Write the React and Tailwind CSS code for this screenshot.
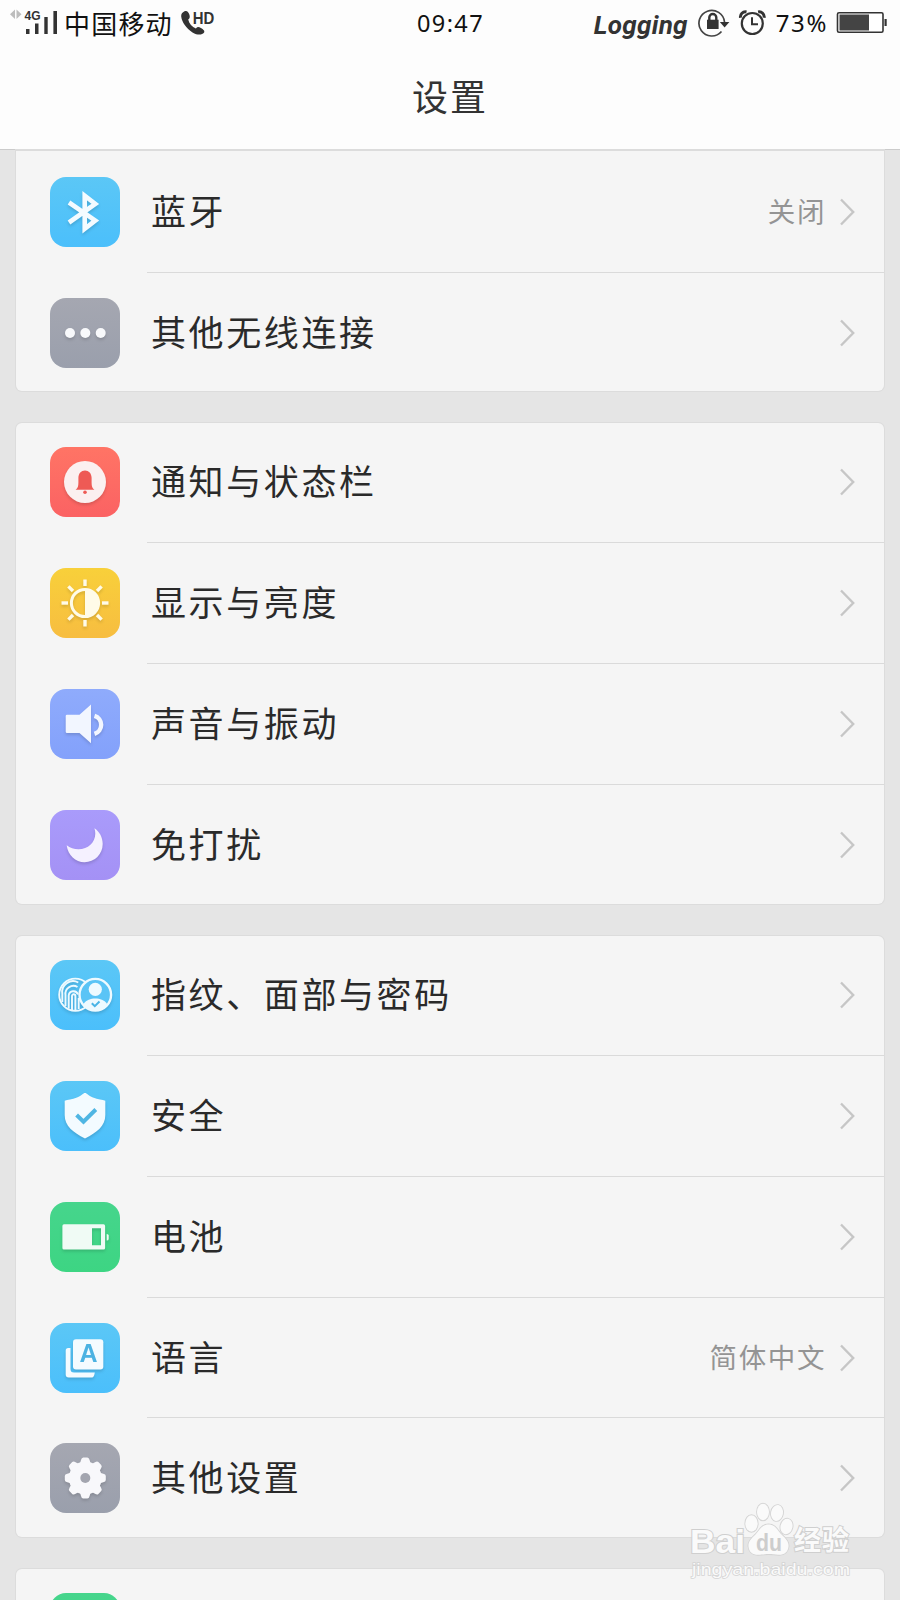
import React from "react";
import clsx from "clsx";

const BLUE = "bg-gradient-to-b from-[#5bc7f6] to-[#4bbffb]";
const GREEN = "bg-gradient-to-b from-[#46d58c] to-[#3dd583]";
const GRAY = "bg-gradient-to-b from-[#a5a7b1] to-[#9a9fac]";

const BluetoothIcon = () => (
  <path d="M19 25.5 45.3 43.6 34.7 51.8V18.8L45.3 27 19 45.5" fill="none" stroke="#f4fbff" strokeWidth="4.6" />
);

const DotsIcon = () => (
  <g fill="#f8f9fb">
    <circle cx="20" cy="35" r="5" />
    <circle cx="35.3" cy="35" r="5" />
    <circle cx="50.7" cy="35" r="5" />
  </g>
);

const BellIcon = () => (
  <>
    <circle cx="35" cy="35" r="21" fill="#fbf0f0" />
    <path d="M25.6 42.8c2.2-1.6 2.8-3.6 2.8-7.4v-4.6c0-4.4 2.8-7.4 6.6-7.4s6.6 3 6.6 7.4v4.6c0 3.8.6 5.8 2.8 7.4z" fill="#ee5a55" />
    <circle cx="35" cy="45.2" r="1.8" fill="#ee5a55" />
  </>
);

const SunIcon = () => (
  <g stroke="#fffbe8" strokeWidth="3.4">
    <circle cx="35" cy="35" r="13.6" fill="none" strokeWidth="3" />
    <path d="M35 21.5a13.5 13.5 0 0 1 0 27z" fill="#fffbe8" stroke="none" />
    {[0, 45, 90, 135, 180, 225, 270, 315].map((deg) => (
      <path key={deg} d="M35 18V11.5" transform={`rotate(${deg} 35 35)`} />
    ))}
  </g>
);

const SpeakerIcon = () => (
  <>
    <path d="M17 25.7H29.5L41 15.5V54.3L29.5 44H17q-1.3 0-1.3-1.3V27q0-1.3 1.3-1.3z" fill="#f2f6ff" />
    <path d="M44.5 26.8a9.4 9.4 0 0 1 0 18" fill="none" stroke="#f2f6ff" strokeWidth="4.4" />
  </>
);

const MoonIcon = () => (
  <path d="M44.400 18.300C49.500 21.500 52.700 27.500 52.700 34A18.400 18.400 0 0 1 34.500 52.300C25.500 52.300 18 45.500 16.700 35.300 20 38 24 39.300 28.500 39.300 38 39.300 45.300 32.500 45.300 23.500 45.300 21.700 45 20 44.400 18.300z" fill="#f5f1ff" />
);

const FaceIdIcon = () => (
  <>
    <g fill="none" stroke="#eefaff" strokeWidth="1.9">
      <circle cx="25.3" cy="34.7" r="16.1" />
      <path d="M12.3 42V34a11 11 0 0 1 16-11.5" />
      <path d="M15.5 46V35a8 8 0 0 1 12-8" />
      <path d="M18.7 48.500V35.500a4.800 4.800 0 0 1 9.300-1" />
      <path d="M22 50V36a1.700 1.700 0 0 1 3.400 0v14" />
      <path d="M28.700 38v11" />
    </g>
    <circle cx="45.3" cy="34.7" r="15.8" fill="#5ac4f6" stroke="#eefaff" strokeWidth="2.4" />
    <circle cx="45.3" cy="29.3" r="6.600" fill="#eefaff" />
    <path d="M33.500 44c3-4.200 7-5.500 11.800-5.500s8.800 1.300 11.800 5.500c-3 4.700-7 6.600-11.800 6.600s-8.800-1.900-11.800-6.600z" fill="#eefaff" />
    <path d="M41.800 43.200l3 3 4.700-4.700" fill="none" stroke="#49b4e6" strokeWidth="2" />
  </>
);

const ShieldIcon = () => (
  <>
    <path d="M35 12c2 0 3 2.500 8 4.500 5 2 9.500 2 12.300 3.300V34c0 11-8.500 17.500-20.300 23.500C23.200 51.500 14.700 45 14.700 34V19.800C17.500 18.500 22 18.500 27 16.500c5-2 6-4.500 8-4.500z" fill="#f3fbff" />
    <path d="M26.600 34l6.900 6.700L45.800 28.500" fill="none" stroke="#4fb6e3" strokeWidth="4" />
  </>
);

const BatteryIcon = () => (
  <>
    <path d="M14 22.300H53.500q1.600 0 1.600 1.600V46q0 1.600-1.600 1.600H14q-1.600 0-1.600-1.600V23.900q0-1.600 1.600-1.600zM42 26.300v17h9v-17z" fill="#f0fbf5" fillRule="evenodd" />
    <path d="M56.700 32q2 0 2 1.500v3.500q0 1.500-2 1.500z" fill="#f0fbf5" />
  </>
);

const LanguageIcon = () => (
  <>
    <rect x="23" y="16.300" width="30.300" height="30.300" rx="3" fill="#f4fbff" />
    <path d="M20.500 25h-2.300q-2.500 0-2.500 2.500V51.500q0 3 3 3H42q2 0 2.800-5H24q-3.500 0-3.500-3.500z" fill="#f4fbff" />
    <text x="38.600" y="39.400" textAnchor="middle" fontSize="25" fontWeight="700" fontFamily="Liberation Sans, sans-serif" fill="#4cb2e2">
      A
    </text>
  </>
);

const GearIcon = () => (
  <>
    <g fill="#f8f8fb">
      <circle cx="35.300" cy="35" r="16.500" />
      {[0, 45, 90, 135, 180, 225, 270, 315].map((deg) => (
        <path key={deg} d="M29.800 21l1.200-4q.6-2.500 2.300-2.500h4q1.700 0 2.300 2.500l1.200 4z" transform={`rotate(${deg} 35.300 35)`} />
      ))}
    </g>
    <circle cx="35.300" cy="35" r="5" fill="#a3a5af" />
  </>
);

const groups = [
  {
    box: "border-t rounded-b-md",
    rows: [
      { label: "蓝牙", value: "关闭", icon: BluetoothIcon, tile: BLUE, size: "h-[122px] pt-[26px]" },
      { label: "其他无线连接", icon: DotsIcon, tile: GRAY, size: "h-[118px] pt-[25px]" },
    ],
  },
  {
    box: "mt-[32px] rounded-md",
    rows: [
      { label: "通知与状态栏", icon: BellIcon, tile: "bg-gradient-to-b from-[#ff7465] to-[#fb6263]", size: "h-[120px] pt-6" },
      { label: "显示与亮度", icon: SunIcon, tile: "bg-gradient-to-b from-[#f8d03a] to-[#f7bd40]", size: "h-[121px] pt-[25px]" },
      { label: "声音与振动", icon: SpeakerIcon, tile: "bg-gradient-to-b from-[#8fabfc] to-[#83a1fb]", size: "h-[121px] pt-[25px]" },
      { label: "免打扰", icon: MoonIcon, tile: "bg-gradient-to-b from-[#a99bfb] to-[#a491f5]", size: "h-[119px] pt-[25px]" },
    ],
  },
  {
    box: "mt-[32px] rounded-md",
    rows: [
      { label: "指纹、面部与密码", icon: FaceIdIcon, tile: BLUE, size: "h-[120px] pt-6" },
      { label: "安全", icon: ShieldIcon, tile: BLUE, size: "h-[121px] pt-[25px]" },
      { label: "电池", icon: BatteryIcon, tile: GREEN, size: "h-[121px] pt-[25px]" },
      { label: "语言", value: "简体中文", icon: LanguageIcon, tile: BLUE, size: "h-[120px] pt-[25px]" },
      { label: "其他设置", icon: GearIcon, tile: GRAY, size: "h-[119px] pt-[25px]" },
    ],
  },
];

function StatusBar() {
  return (
    <div className="grid h-[46px] grid-cols-[1fr_auto_1fr] items-center pr-[13px] pl-[10px] text-[#111]">
      <div className="flex items-center">
        <svg className="h-[46px] w-[54px] shrink-0" viewBox="10 0 54 46">
          <path d="M15 9.500v9.500l-5-4.700zM16.500 9.500v9.500l5-4.700z" fill="#bdbdbd" />
          <text x="24.500" y="20" fontSize="12" fontWeight="700" fontFamily="Liberation Sans, sans-serif" fill="#333">
            4G
          </text>
          <path d="M26 29h3.500v5H26zM35 23.500h3.500V34H35zM44.300 17h3.400v17h-3.400zM53.400 11H57v23h-3.600z" fill="#333" />
        </svg>
        <span className="text-[26px] leading-[42px] tracking-[1.200px]">中国移动</span>
        <svg className="ml-[6px] h-[46px] w-[40px] shrink-0" viewBox="179 0 40 46">
          <path d="M184.500 11.300c2.400-1.300 4.200 1 5 3.600.6 2.300.2 3.400-1.300 4.500 1 4.200 3.800 7.500 7.700 9 1.500-1.800 3-1.600 5-.4 2.400 1.400 4.400 3 3 4.800-1.900 2.300-6.400 2.600-11.400-.4-6.300-3.900-10.600-10-11.300-15.800-.3-2.600 1.200-4.300 3.300-5.300z" fill="#333" />
          <text x="192.800" y="23.800" fontSize="16" fontWeight="700" textLength="21.500" lengthAdjust="spacingAndGlyphs" fontFamily="Liberation Sans, sans-serif" fill="#333">
            HD
          </text>
        </svg>
      </div>
      <span className="-mt-px pl-[4px] font-['Noto_Sans'] text-[23.500px] leading-[46px] tracking-[1.400px]">09:47</span>
      <div className="flex items-center justify-end">
        <span className="pt-[4px] font-[Roboto] text-[26px] leading-none font-bold tracking-[0.300px] text-[#333] italic">Logging</span>
        <svg className="ml-[10px] h-[46px] w-[32px] shrink-0" viewBox="697 0 32 46">
          <path d="M720.500 31.500a12.800 12.800 0 1 1 3-9.500" fill="none" stroke="#444" strokeWidth="1.700" />
          <path d="M718.800 22h9.600l-4.800 5.500z" fill="#333" />
          <path d="M706 19.700h11.600v9.300H706z" fill="#333" />
          <path d="M708.300 20v-2.500a3.500 3.500 0 0 1 7 0V20" fill="none" stroke="#333" strokeWidth="2.400" />
        </svg>
        <svg className="ml-[8px] h-[46px] w-[28px] shrink-0" viewBox="737 0 28 46">
          <circle cx="751.300" cy="23.500" r="10.500" fill="none" stroke="#333" strokeWidth="2.200" />
          <path d="M751 17.300v6.900h6" fill="none" stroke="#333" strokeWidth="2" />
          <path d="M739.500 17.800a5 5 0 0 1 6-5.800M763.100 17.800a5 5 0 0 0-6-5.800" fill="none" stroke="#333" strokeWidth="3" />
        </svg>
        <span className="ml-[10px] font-['Noto_Sans'] text-[24px] leading-[42px] tracking-[1.600px]">73%</span>
        <svg className="ml-[8px] h-[46px] w-[51px] shrink-0" viewBox="836 0 51 46">
          <rect x="837.500" y="12.700" width="45.500" height="19.600" rx="1.500" fill="#fff" stroke="#333" strokeWidth="1.600" />
          <path d="M839.500 14.500H869v16h-29.500z" fill="#444" />
          <path d="M884.500 19h2.200v7h-2.200z" fill="#333" />
        </svg>
      </div>
    </div>
  );
}

function Row({ row, last }) {
  const Icon = row.icon;
  return (
    <div className={clsx("flex pl-[34px]", row.size)}>
      <div className={clsx("h-[70px] w-[70px] shrink-0 rounded-[16px]", row.tile)}>
        <svg className="h-[70px] w-[70px] drop-shadow-[0_2px_1.500px_rgba(0,0,0,0.140)]" viewBox="0 0 70 70">
          <Icon />
        </svg>
      </div>
      <div className={clsx("ml-[27px] flex flex-1 pr-[28px] pl-[4px]", !last && "border-b border-[#dadada]")}>
        <span className="text-[35px] leading-[65px] tracking-[2.600px] whitespace-nowrap text-[#2a2a2a]">{row.label}</span>
        <span className="ml-auto text-[27.500px] leading-[66px] tracking-[1.600px] text-[#949494]">{row.value}</span>
        <svg className="ml-[14px] h-[70px] w-[16px]" viewBox="0 0 16 70" fill="none" stroke="#c6c6c6" strokeWidth="2.400">
          <path d="M1 22.500 13.200 35 1 47.500" />
        </svg>
      </div>
    </div>
  );
}

function Watermark() {
  return (
    <svg className="absolute top-[1500px] left-[688px] h-[84px] w-[168px]" viewBox="688 1500 168 84" fill="#fafafa" stroke="#cfcfcf" strokeWidth="2" paintOrder="stroke">
      <text x="690" y="1552.500" fontSize="33" fontWeight="700" fontFamily="Liberation Sans, sans-serif" textLength="55" lengthAdjust="spacingAndGlyphs">
        Bai
      </text>
      <text x="794" y="1550" fontSize="27" fontWeight="700" fontFamily="Noto Sans CJK SC, sans-serif" textLength="55">
        经验
      </text>
      <g stroke="#d4d4d4" strokeWidth="1.800">
        <ellipse cx="751.500" cy="1523.500" rx="6.200" ry="8.300" />
        <ellipse cx="763" cy="1512" rx="6" ry="8.300" />
        <ellipse cx="777" cy="1513" rx="6" ry="8" transform="rotate(10 777 1513)" />
        <ellipse cx="786.500" cy="1526.500" rx="6" ry="7.800" transform="rotate(12 786.500 1526.500)" />
        <path d="M768.500 1524.500c7 0 9 6 13 10 4.500 4.300 7.500 7.500 7 12-.6 6-4.500 8.500-10 8.300-4-.2-6-.8-10-.8s-6 .8-10 .8c-5.500.2-9.400-2.300-10-8.300-.5-4.500 2.500-7.700 7-12 4-4 6-10 13-10z" />
      </g>
      <text x="756" y="1550.500" fontSize="23" fontWeight="700" fontFamily="Liberation Sans, sans-serif" fill="#cdcdcd" stroke="none" textLength="26" lengthAdjust="spacingAndGlyphs">
        du
      </text>
      <text x="692" y="1575" fontSize="17" fontFamily="Liberation Sans, sans-serif" stroke="#d4d4d4" strokeWidth="1.500" textLength="158" lengthAdjust="spacingAndGlyphs">
        jingyan.baidu.com
      </text>
    </svg>
  );
}

export default function App() {
  return (
    <div className="relative h-[1600px] w-[900px] overflow-hidden bg-[#e5e5e5] font-['Noto_Sans_CJK_SC',sans-serif]">
      <header className="h-[150px] border-b border-[#cbcbcb] bg-[#fdfdfd]">
        <StatusBar />
        <h1 className="pt-[14px] text-center text-[36px] leading-[70px] tracking-[2px] text-[#333]">设置</h1>
      </header>
      <main className="px-4">
        {groups.map((group) => (
          <section key={group.rows[0].label} className={clsx("border-[#dcdcdc] bg-[#f5f5f5] ring-1 ring-[#dcdcdc]", group.box)}>
            {group.rows.map((row, i) => (
              <Row key={row.label} row={row} last={i === group.rows.length - 1} />
            ))}
          </section>
        ))}
        <section className="mt-[32px] h-[60px] rounded-t-md bg-[#f5f5f5] pt-6 pl-[34px] ring-1 ring-[#dcdcdc]">
          <div className={clsx("h-[70px] w-[70px] rounded-[16px]", GREEN)} />
        </section>
      </main>
      <Watermark />
    </div>
  );
}
